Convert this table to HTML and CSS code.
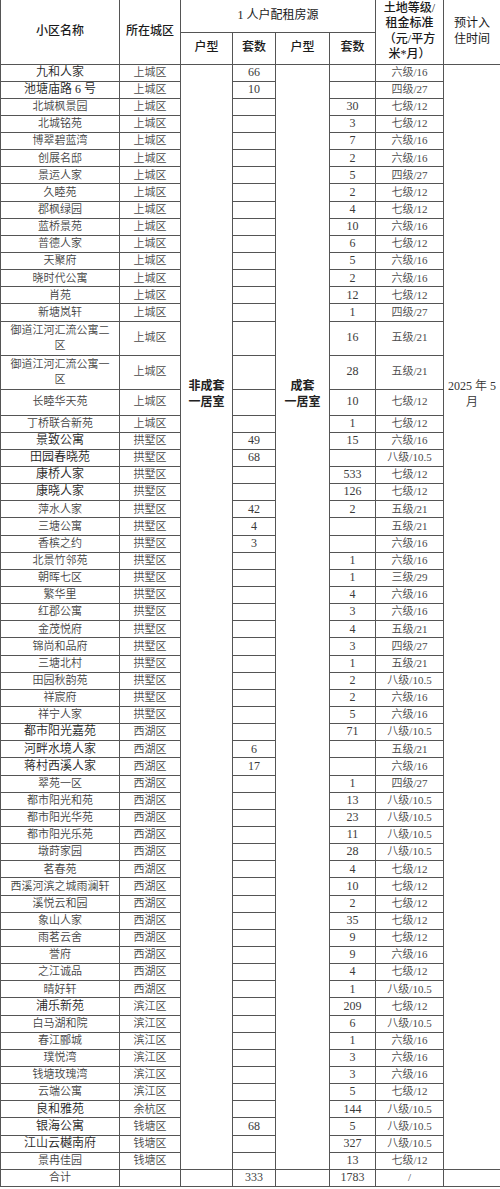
FILE: index.html
```html
<!DOCTYPE html>
<html lang="zh-CN">
<head>
<meta charset="utf-8">
<title>1人户配租房源</title>
<link rel="stylesheet" href="styles.css">
</head>
<body>
<table class="sheet">
  <colgroup>
    <col class="w-name"><col class="w-dist"><col class="w-type"><col class="w-cnt1"><col class="w-type2"><col class="w-cnt2"><col class="w-grade"><col class="w-time">
  </colgroup>
  <thead>
    <tr class="h1">
      <th rowspan="2" class="hb">小区名称</th>
      <th rowspan="2" class="hb">所在城区</th>
      <th colspan="4" class="hr">1 人户配租房源</th>
      <th rowspan="2" class="hb hp">土地等级/租金标准（元/平方米*月）</th>
      <th rowspan="2" class="hr hp">预计入住时间</th>
    </tr>
    <tr class="h2">
      <th class="hb">户型</th><th class="hb">套数</th><th class="hb">户型</th><th class="hb">套数</th>
    </tr>
  </thead>
  <tbody>
    <tr><td class="lg">九和人家</td><td class="d">上城区</td><td class="m1" rowspan="36"><span class="mt">非成套<br>一居室</span></td><td class="v">66</td><td class="m1" rowspan="36"><span class="mt">成套<br>一居室</span></td><td class="v"></td><td class="g">六级/16</td><td class="m1 tm" rowspan="36">2025 年 5 月</td></tr>
    <tr><td class="lg">池塘庙路 6 号</td><td class="d">上城区</td><td class="v">10</td><td class="v"></td><td class="g">四级/27</td></tr>
    <tr><td>北城枫景园</td><td class="d">上城区</td><td class="v"></td><td class="v">30</td><td class="g">七级/12</td></tr>
    <tr><td>北城铭苑</td><td class="d">上城区</td><td class="v"></td><td class="v">3</td><td class="g">七级/12</td></tr>
    <tr><td>博翠碧蓝湾</td><td class="d">上城区</td><td class="v"></td><td class="v">7</td><td class="g">六级/16</td></tr>
    <tr><td>创展名邸</td><td class="d">上城区</td><td class="v"></td><td class="v">2</td><td class="g">六级/16</td></tr>
    <tr><td>景运人家</td><td class="d">上城区</td><td class="v"></td><td class="v">5</td><td class="g">四级/27</td></tr>
    <tr><td>久睦苑</td><td class="d">上城区</td><td class="v"></td><td class="v">2</td><td class="g">七级/12</td></tr>
    <tr><td>郡枫绿园</td><td class="d">上城区</td><td class="v"></td><td class="v">4</td><td class="g">七级/12</td></tr>
    <tr><td>蓝桥景苑</td><td class="d">上城区</td><td class="v"></td><td class="v">10</td><td class="g">六级/16</td></tr>
    <tr><td>普德人家</td><td class="d">上城区</td><td class="v"></td><td class="v">6</td><td class="g">七级/12</td></tr>
    <tr><td>天聚府</td><td class="d">上城区</td><td class="v"></td><td class="v">5</td><td class="g">六级/16</td></tr>
    <tr><td>晓时代公寓</td><td class="d">上城区</td><td class="v"></td><td class="v">2</td><td class="g">六级/16</td></tr>
    <tr><td>肖苑</td><td class="d">上城区</td><td class="v"></td><td class="v">12</td><td class="g">七级/12</td></tr>
    <tr><td>新塘岚轩</td><td class="d">上城区</td><td class="v"></td><td class="v">1</td><td class="g">四级/27</td></tr>
    <tr class="dbl"><td>御道江河汇流公寓二区</td><td class="d">上城区</td><td class="v"></td><td class="v">16</td><td class="g">五级/21</td></tr>
    <tr class="dbl"><td>御道江河汇流公寓一区</td><td class="d">上城区</td><td class="v"></td><td class="v">28</td><td class="g">五级/21</td></tr>
    <tr class="tall"><td>长睦华天苑</td><td class="d">上城区</td><td class="v"></td><td class="v">10</td><td class="g">七级/12</td></tr>
    <tr><td>丁桥联合新苑</td><td class="d">上城区</td><td class="v"></td><td class="v">1</td><td class="g">七级/12</td></tr>
    <tr><td class="lg">景致公寓</td><td class="d">拱墅区</td><td class="v">49</td><td class="v">15</td><td class="g">六级/16</td></tr>
    <tr><td class="lg">田园春晓苑</td><td class="d">拱墅区</td><td class="v">68</td><td class="v"></td><td class="g">八级/10.5</td></tr>
    <tr><td class="lg">康桥人家</td><td class="d">拱墅区</td><td class="v"></td><td class="v">533</td><td class="g">七级/12</td></tr>
    <tr><td class="lg">康晓人家</td><td class="d">拱墅区</td><td class="v"></td><td class="v">126</td><td class="g">七级/12</td></tr>
    <tr><td>萍水人家</td><td class="d">拱墅区</td><td class="v">42</td><td class="v">2</td><td class="g">五级/21</td></tr>
    <tr><td>三塘公寓</td><td class="d">拱墅区</td><td class="v">4</td><td class="v"></td><td class="g">五级/21</td></tr>
    <tr><td>香槟之约</td><td class="d">拱墅区</td><td class="v">3</td><td class="v"></td><td class="g">六级/16</td></tr>
    <tr><td>北景竹邻苑</td><td class="d">拱墅区</td><td class="v"></td><td class="v">1</td><td class="g">六级/16</td></tr>
    <tr><td>朝晖七区</td><td class="d">拱墅区</td><td class="v"></td><td class="v">1</td><td class="g">三级/29</td></tr>
    <tr><td>繁华里</td><td class="d">拱墅区</td><td class="v"></td><td class="v">4</td><td class="g">六级/16</td></tr>
    <tr><td>红郡公寓</td><td class="d">拱墅区</td><td class="v"></td><td class="v">3</td><td class="g">六级/16</td></tr>
    <tr><td>金茂悦府</td><td class="d">拱墅区</td><td class="v"></td><td class="v">4</td><td class="g">五级/21</td></tr>
    <tr><td>锦尚和品府</td><td class="d">拱墅区</td><td class="v"></td><td class="v">3</td><td class="g">四级/27</td></tr>
    <tr><td>三塘北村</td><td class="d">拱墅区</td><td class="v"></td><td class="v">1</td><td class="g">五级/21</td></tr>
    <tr><td>田园秋韵苑</td><td class="d">拱墅区</td><td class="v"></td><td class="v">2</td><td class="g">八级/10.5</td></tr>
    <tr><td>祥宸府</td><td class="d">拱墅区</td><td class="v"></td><td class="v">2</td><td class="g">六级/16</td></tr>
    <tr><td>祥宁人家</td><td class="d">拱墅区</td><td class="v"></td><td class="v">5</td><td class="g">六级/16</td></tr>
    <tr><td class="lg">都市阳光嘉苑</td><td class="d">西湖区</td><td class="m2" rowspan="26"></td><td class="v"></td><td class="m2" rowspan="26"></td><td class="v">71</td><td class="g">八级/10.5</td><td class="m2" rowspan="26"></td></tr>
    <tr><td class="lg">河畔水境人家</td><td class="d">西湖区</td><td class="v">6</td><td class="v"></td><td class="g">五级/21</td></tr>
    <tr><td class="lg">蒋村西溪人家</td><td class="d">西湖区</td><td class="v">17</td><td class="v"></td><td class="g">六级/16</td></tr>
    <tr><td>翠苑一区</td><td class="d">西湖区</td><td class="v"></td><td class="v">1</td><td class="g">四级/27</td></tr>
    <tr><td>都市阳光和苑</td><td class="d">西湖区</td><td class="v"></td><td class="v">13</td><td class="g">八级/10.5</td></tr>
    <tr><td>都市阳光华苑</td><td class="d">西湖区</td><td class="v"></td><td class="v">23</td><td class="g">八级/10.5</td></tr>
    <tr><td>都市阳光乐苑</td><td class="d">西湖区</td><td class="v"></td><td class="v">11</td><td class="g">八级/10.5</td></tr>
    <tr><td>墩莳家园</td><td class="d">西湖区</td><td class="v"></td><td class="v">28</td><td class="g">八级/10.5</td></tr>
    <tr><td>茗春苑</td><td class="d">西湖区</td><td class="v"></td><td class="v">4</td><td class="g">七级/12</td></tr>
    <tr><td>西溪河滨之城雨澜轩</td><td class="d">西湖区</td><td class="v"></td><td class="v">10</td><td class="g">七级/12</td></tr>
    <tr><td>溪悦云和园</td><td class="d">西湖区</td><td class="v"></td><td class="v">2</td><td class="g">七级/12</td></tr>
    <tr><td>象山人家</td><td class="d">西湖区</td><td class="v"></td><td class="v">35</td><td class="g">七级/12</td></tr>
    <tr><td>雨茗云舍</td><td class="d">西湖区</td><td class="v"></td><td class="v">9</td><td class="g">七级/12</td></tr>
    <tr><td>誉府</td><td class="d">西湖区</td><td class="v"></td><td class="v">9</td><td class="g">六级/16</td></tr>
    <tr><td>之江诚品</td><td class="d">西湖区</td><td class="v"></td><td class="v">4</td><td class="g">七级/12</td></tr>
    <tr><td>晴好轩</td><td class="d">西湖区</td><td class="v"></td><td class="v">1</td><td class="g">八级/10.5</td></tr>
    <tr><td class="lg">浦乐新苑</td><td class="d">滨江区</td><td class="v"></td><td class="v">209</td><td class="g">七级/12</td></tr>
    <tr><td>白马湖和院</td><td class="d">滨江区</td><td class="v"></td><td class="v">6</td><td class="g">八级/10.5</td></tr>
    <tr><td>春江郦城</td><td class="d">滨江区</td><td class="v"></td><td class="v">1</td><td class="g">六级/16</td></tr>
    <tr><td>璞悦湾</td><td class="d">滨江区</td><td class="v"></td><td class="v">3</td><td class="g">六级/16</td></tr>
    <tr><td>钱塘玫瑰湾</td><td class="d">滨江区</td><td class="v"></td><td class="v">3</td><td class="g">六级/16</td></tr>
    <tr><td>云端公寓</td><td class="d">滨江区</td><td class="v"></td><td class="v">5</td><td class="g">七级/12</td></tr>
    <tr><td class="lg">良和雅苑</td><td class="d">余杭区</td><td class="v"></td><td class="v">144</td><td class="g">八级/10.5</td></tr>
    <tr><td class="lg">银海公寓</td><td class="d">钱塘区</td><td class="v">68</td><td class="v">5</td><td class="g">八级/10.5</td></tr>
    <tr><td class="lg">江山云樾南府</td><td class="d">钱塘区</td><td class="v"></td><td class="v">327</td><td class="g">八级/10.5</td></tr>
    <tr><td>景冉佳园</td><td class="d">钱塘区</td><td class="v"></td><td class="v">13</td><td class="g">七级/12</td></tr>
    <tr class="total"><td>合计</td><td class="d"></td><td></td><td class="v">333</td><td></td><td class="v">1783</td><td class="g">/</td><td></td></tr>
  </tbody>
</table>
</body>
</html>
```

FILE: styles.css
```css
html, body {
  margin: 0;
  padding: 0;
  background: #ffffff;
}

body {
  font-family: "Liberation Serif", "Noto Sans CJK SC", serif;
  color: #444444;
}

.sheet {
  border-collapse: collapse;
  table-layout: fixed;
  width: 500px;
}

.w-name { width: 119px; }
.w-dist { width: 61px; }
.w-type { width: 52px; }
.w-cnt1 { width: 43px; }
.w-type2 { width: 54px; }
.w-cnt2 { width: 46px; }
.w-grade { width: 68px; }
.w-time { width: 57px; }

.sheet th,
.sheet td {
  border: 1px solid #555555;
  padding: 0 5px;
  text-align: center;
  vertical-align: middle;
  font-size: 11px;
  line-height: 15.5px;
  font-weight: 350;
  white-space: normal;
}

.sheet th {
  font-size: 12px;
  line-height: 15.3px;
  color: #1e1e1e;
  font-weight: 400;
}

.sheet th.hb {
  font-weight: 500;
  color: #1a1a1a;
}

.sheet th.hr {
  font-weight: 400;
  color: #1a1a1a;
}

.sheet th.hp {
  padding: 0 5px;
}

.h1 th {
  border-top: none;
}

.h1 { height: 32px; }
.h2 { height: 32px; }

.sheet th:last-child,
.sheet td:last-child {
  border-right-color: #c8c8c8;
}

.sheet tbody tr { height: 17.15px; }
.sheet tbody tr.dbl { height: 34px; }
.sheet tbody tr.tall { height: 26px; }

.sheet td.lg {
  font-size: 12px;
  color: #1e1e1e;
  font-weight: 350;
}

.sheet td.d {
  color: #4a4a4a;
}

.sheet td.v {
  font-size: 12px;
  color: #3a3a3a;
}

.sheet td.g {
  color: #4a4a4a;
}

.sheet td.m1 {
  border-bottom: none;
}

.sheet td.m2 {
  border-top: none;
}

.mt {
  font-size: 12px;
  line-height: 16px;
  font-weight: 700;
  color: #222222;
}

.sheet td.tm {
  font-size: 12px;
  line-height: 16px;
  color: #333333;
  padding: 0 1px;
}

.sheet tr.total td {
  color: #444444;
}
```
